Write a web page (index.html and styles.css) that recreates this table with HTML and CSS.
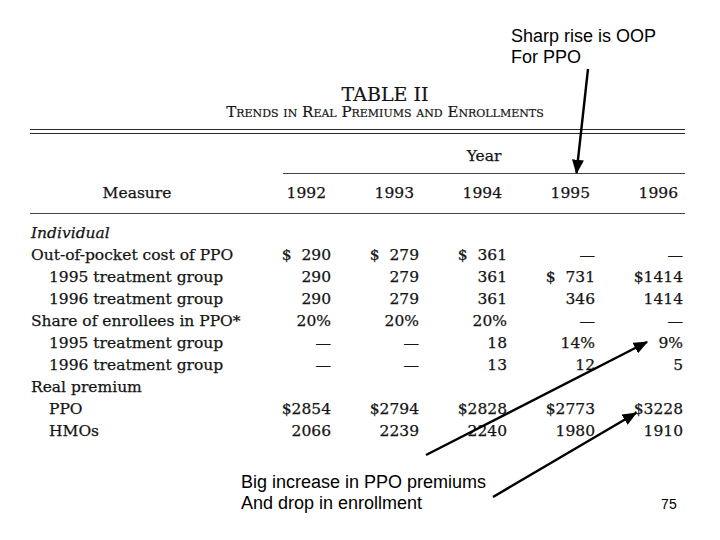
FILE: index.html
```html
<!DOCTYPE html>
<html lang="en">
<head>
<meta charset="utf-8">
<title>Table II</title>
<link rel="stylesheet" href="styles.css">
</head>
<body>
<div class="slide">
  <div class="note note-top">Sharp rise is OOP<br>For PPO</div>

  <div class="caption">
    <div class="cap-num">TABLE II</div>
    <div class="cap-title">Trends in Real Premiums and Enrollments</div>
  </div>

  <div class="table">
    <div class="dbl"></div>
    <div class="year-row"><div class="year">Year</div></div>
    <div class="grid head">
      <div class="measure">Measure</div>
      <div class="yr">1992</div><div class="yr">1993</div><div class="yr">1994</div><div class="yr">1995</div><div class="yr">1996</div>
    </div>
    <div class="grid body">
      <div class="lab it">Individual</div><div></div><div></div><div></div><div></div><div></div>

      <div class="lab">Out-of-pocket cost of PPO</div>
      <div class="v">$&#8199;290</div><div class="v">$&#8199;279</div><div class="v">$&#8199;361</div><div class="v">—</div><div class="v">—</div>

      <div class="lab in">1995 treatment group</div>
      <div class="v">290</div><div class="v">279</div><div class="v">361</div><div class="v">$&#8199;731</div><div class="v">$1414</div>

      <div class="lab in">1996 treatment group</div>
      <div class="v">290</div><div class="v">279</div><div class="v">361</div><div class="v">346</div><div class="v">1414</div>

      <div class="lab">Share of enrollees in PPO*</div>
      <div class="v">20%</div><div class="v">20%</div><div class="v">20%</div><div class="v">—</div><div class="v">—</div>

      <div class="lab in">1995 treatment group</div>
      <div class="v">—</div><div class="v">—</div><div class="v">18</div><div class="v">14%</div><div class="v">9%</div>

      <div class="lab in">1996 treatment group</div>
      <div class="v">—</div><div class="v">—</div><div class="v">13</div><div class="v">12</div><div class="v">5</div>

      <div class="lab">Real premium</div><div></div><div></div><div></div><div></div><div></div>

      <div class="lab in">PPO</div>
      <div class="v">$2854</div><div class="v">$2794</div><div class="v">$2828</div><div class="v">$2773</div><div class="v">$3228</div>

      <div class="lab in">HMOs</div>
      <div class="v">2066</div><div class="v">2239</div><div class="v">2240</div><div class="v">1980</div><div class="v">1910</div>
    </div>
  </div>

  <div class="bottom">
    <div class="note">Big increase in PPO premiums<br>And drop in enrollment</div>
    <div class="page">75</div>
  </div>

  <svg class="arrows" width="720" height="540" viewBox="0 0 720 540">
    <defs>
      <marker id="ah" markerWidth="6" markerHeight="5" refX="5.5" refY="2.5" orient="auto" markerUnits="strokeWidth">
        <path d="M0,0 L6,2.5 L0,5 Z" fill="#000"/>
      </marker>
    </defs>
    <line x1="588" y1="69" x2="576.5" y2="173" stroke="#000" stroke-width="2.4" marker-end="url(#ah)"/>
    <line x1="426" y1="455" x2="647" y2="342" stroke="#000" stroke-width="2.4" marker-end="url(#ah)"/>
    <line x1="493" y1="497" x2="636" y2="413" stroke="#000" stroke-width="2.4" marker-end="url(#ah)"/>
  </svg>
</div>
</body>
</html>
```

FILE: styles.css
```css
html, body {
  margin: 0;
  padding: 0;
  background: #fff;
}

.slide {
  position: relative;
  width: 720px;
  height: 540px;
  overflow: hidden;
  font-family: "DejaVu Serif", "Liberation Serif", serif;
  color: #141414;
  padding-top: 26px;
  box-sizing: border-box;
}

.note {
  font-family: "Liberation Sans", Arial, sans-serif;
  font-size: 18px;
  line-height: 21px;
  color: #000;
}

.note-top {
  margin-left: 511px;
}

.caption {
  margin-top: 17px;
  margin-left: 30px;
  width: 710px;
  text-align: center;
  -webkit-text-stroke: 0.2px #141414;
}

.cap-num {
  font-size: 19px;
  line-height: 19px;
}

.cap-title {
  font-size: 15px;
  line-height: 17px;
  font-variant: small-caps;
}

.table {
  margin-left: 30px;
  width: 655px;
  margin-top: 8px;
  font-size: 15.5px;
  -webkit-text-stroke: 0.25px #141414;
}

.dbl {
  height: 2.5px;
  border-top: 1.6px solid #2a2a2a;
  border-bottom: 1.6px solid #2a2a2a;
}

.year-row {
  padding-left: 253px;
}

.year {
  padding-top: 5px;
  height: 34px;
  line-height: 34px;
  text-align: center;
  border-bottom: 1.4px solid #444;
}

.grid {
  display: grid;
  grid-template-columns: 214px repeat(5, 88px);
}

.head {
  height: 39px;
  line-height: 39px;
  border-bottom: 1.4px solid #444;
}

.measure {
  text-align: center;
}

.yr {
  text-align: right;
  padding-right: 6px;
}

.body {
  padding-top: 8px;
  grid-auto-rows: 22px;
  line-height: 22px;
}

.lab {
  padding-left: 1px;
  white-space: nowrap;
}

.lab.in {
  padding-left: 19px;
}

.lab.it {
  font-style: italic;
}

.v {
  text-align: right;
  padding-right: 1px;
  white-space: nowrap;
}

.bottom {
  display: flex;
  align-items: flex-end;
  margin-top: 30px;
  margin-left: 241px;
}

.page {
  font-family: "Liberation Sans", Arial, sans-serif;
  font-size: 14px;
  margin-left: 175px;
  padding-bottom: 2px;
  color: #000;
}

.arrows {
  position: absolute;
  left: 0;
  top: 0;
  pointer-events: none;
}
```
